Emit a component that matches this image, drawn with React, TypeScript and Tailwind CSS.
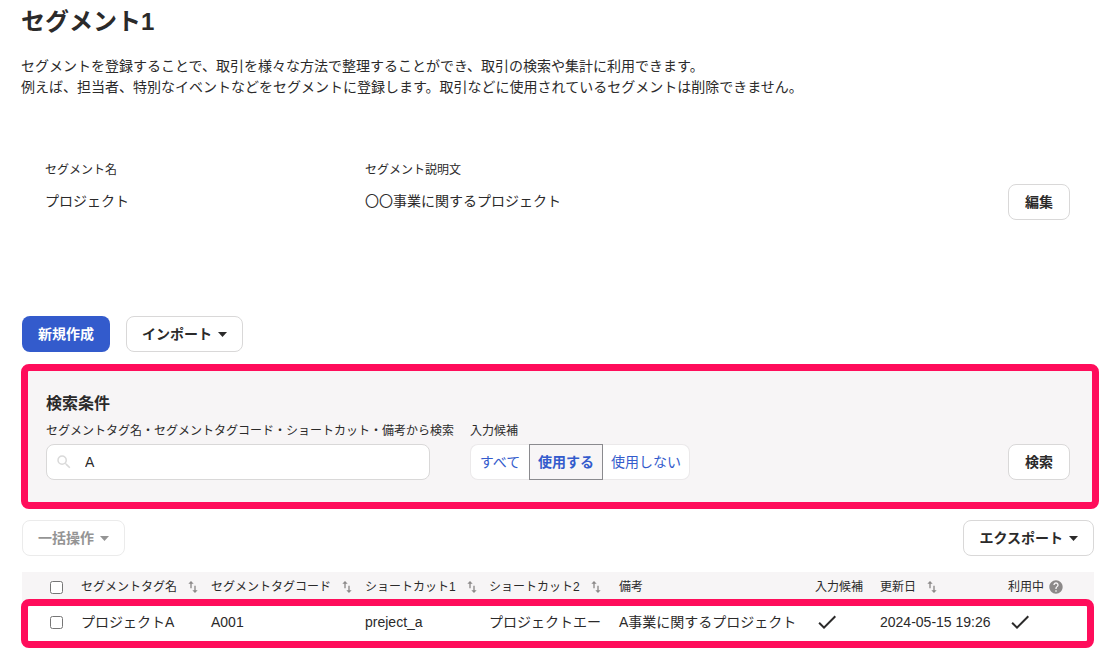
import { useState } from "react";
import type { ReactNode } from "react";
import { MdCheck, MdHelp, MdImportExport, MdSearch } from "react-icons/md";

interface Tag {
  id: number;
  name: string;
  code: string;
  shortcut1: string;
  shortcut2: string;
  note: string;
  suggest: boolean;
  updatedAt: string;
  active: boolean;
}

const tags: Tag[] = [
  {
    id: 1,
    name: "プロジェクトA",
    code: "A001",
    shortcut1: "preject_a",
    shortcut2: "プロジェクトエー",
    note: "A事業に関するプロジェクト",
    suggest: true,
    updatedAt: "2024-05-15 19:26",
    active: true,
  },
];

const columns = [
  { label: "セグメントタグ名", width: "w-[130px]", sortable: true },
  { label: "セグメントタグコード", width: "w-[154px]", sortable: true },
  { label: "ショートカット1", width: "w-[124px]", sortable: true },
  { label: "ショートカット2", width: "w-[130px]", sortable: true },
  { label: "備考", width: "w-auto", sortable: false },
  { label: "入力候補", width: "w-[65px]", sortable: false },
  { label: "更新日", width: "w-[128px]", sortable: true },
  { label: "利用中", width: "w-[94px]", sortable: false, help: true },
];

const suggestOptions = ["すべて", "使用する", "使用しない"];

function Caret() {
  return (
    <svg viewBox="0 0 9 5" className="w-[9px] h-[5px] fill-current" aria-hidden="true">
      <path d="M0 0h9L4.5 5z" />
    </svg>
  );
}

function Button({ children, disabled }: { children: ReactNode; disabled?: boolean }) {
  return (
    <button
      type="button"
      disabled={disabled}
      className="flex items-center justify-center gap-1.5 min-w-[62px] h-9 px-[15px] rounded-lg border border-[#d9d8d8] bg-white text-sm font-bold whitespace-nowrap hover:bg-[#f7f5f5] disabled:border-[#ebebeb] disabled:text-[#949494] disabled:bg-white"
    >
      {children}
    </button>
  );
}

export default function App() {
  const [query, setQuery] = useState("A");
  const [suggest, setSuggest] = useState("使用する");
  const [selected, setSelected] = useState<number[]>([]);

  const allSelected = selected.length === tags.length;

  function toggle(id: number) {
    setSelected((prev) => (prev.includes(id) ? prev.filter((v) => v !== id) : [...prev, id]));
  }

  return (
    <main className="min-h-screen pt-1 pb-3 pl-[21px] pr-[15px] bg-white text-[#2b2a2a] font-['Liberation_Sans','Noto_Sans_CJK_JP',sans-serif]">
      {/* Header */}
      <h1 className="text-2xl leading-9 font-bold">セグメント1</h1>
      <p className="mt-4 text-sm leading-[21px]">
        セグメントを登録することで、取引を様々な方法で整理することができ、取引の検索や集計に利用できます。
        <br />
        例えば、担当者、特別なイベントなどをセグメントに登録します。取引などに使用されているセグメントは削除できません。
      </p>

      {/* Segment info */}
      <section className="flex items-end mt-[62px] pl-6 pr-[29px] h-[60px]">
        <dl className="flex flex-1 self-start">
          <div className="w-80">
            <dt className="text-xs leading-5">セグメント名</dt>
            <dd className="mt-[11px] text-sm leading-[21px]">プロジェクト</dd>
          </div>
          <div className="flex-1">
            <dt className="text-xs leading-5">セグメント説明文</dt>
            <dd className="mt-[11px] text-sm leading-[21px]">〇〇事業に関するプロジェクト</dd>
          </div>
        </dl>
        <Button>編集</Button>
      </section>

      <div className="flex gap-4 mt-24 pl-px">
        <button
          type="button"
          className="h-9 px-4 rounded-lg bg-[#335bcc] text-white text-sm font-bold hover:bg-[#2b4fb3]"
        >
          新規作成
        </button>
        <Button>
          インポート
          <Caret />
        </Button>
      </div>

      {/* Search */}
      <form
        onSubmit={(e) => e.preventDefault()}
        className="mt-3 pt-[21px] pb-[22px] pl-[18px] pr-[22px] border-[7px] border-[#ff0d5b] rounded-lg bg-[#f7f5f6]"
      >
        <h2 className="text-base leading-6 font-bold">検索条件</h2>
        <div className="flex items-end gap-4 mt-1.5">
          <div>
            <label htmlFor="query" className="block text-xs leading-[18px] whitespace-nowrap">
              セグメントタグ名・セグメントタグコード・ショートカット・備考から検索
            </label>
            <div className="flex items-center gap-3 w-96 h-9 mt-1 pl-2 pr-3 rounded-lg border border-[#d9d8d8] bg-white">
              <MdSearch className="w-[18px] h-[18px] text-[#d9d9d9]" />
              <input
                id="query"
                type="text"
                value={query}
                onChange={(e) => setQuery(e.target.value)}
                className="flex-1 min-w-0 text-sm outline-none"
              />
            </div>
          </div>
          <div role="group" aria-labelledby="suggest-label">
            <div id="suggest-label" className="text-xs leading-[18px]">入力候補</div>
            <div className="flex h-9 mt-1">
              {suggestOptions.map((option) => (
                <button
                  key={option}
                  type="button"
                  aria-pressed={suggest === option}
                  onClick={() => setSuggest(option)}
                  className={`min-w-[59px] px-2 border text-sm text-[#335bcc] whitespace-nowrap first:rounded-l-lg first:border-r-0 last:rounded-r-lg last:border-l-0 ${suggest === option ? "border-[#8a8a8e] bg-[#f7f5f6] font-bold" : "border-[#ebe9ea] bg-white"}`}
                >
                  {option}
                </button>
              ))}
            </div>
          </div>
          <div className="ml-auto">
            <Button>検索</Button>
          </div>
        </div>
      </form>

      <div className="flex justify-between mt-[11px] pl-px pr-[5px]">
        <Button disabled>
          一括操作
          <Caret />
        </Button>
        <Button>
          エクスポート
          <Caret />
        </Button>
      </div>

      {/* Table */}
      <div className="relative mt-4 pl-px mr-[5px]">
        <table className="w-full table-fixed text-left">
          <thead className="bg-[#f7f5f6]">
            <tr className="h-[30px]">
              <th className="w-[51px] pl-7">
                <input
                  type="checkbox"
                  aria-label="すべて選択"
                  checked={allSelected}
                  onChange={() => setSelected(allSelected ? [] : tags.map((t) => t.id))}
                  className="block w-[13px] h-[13px]"
                />
              </th>
              {columns.map((col) => (
                <th key={col.label} className={`${col.width} pl-2 text-xs font-normal whitespace-nowrap`}>
                  <span className="flex items-center">
                    {col.label}
                    {col.sortable && (
                      <button type="button" aria-label={`${col.label}で並べ替え`} className="ml-2">
                        <MdImportExport className="w-4 h-4 text-[#8c8989]" />
                      </button>
                    )}
                    {col.help && <MdHelp className="w-4 h-4 ml-1 text-[#8c8989]" />}
                  </span>
                </th>
              ))}
            </tr>
          </thead>
          <tbody>
            {tags.map((tag) => (
              <tr key={tag.id} className="h-10 text-sm whitespace-nowrap">
                <td className="pl-7">
                  <input
                    type="checkbox"
                    aria-label={tag.name}
                    checked={selected.includes(tag.id)}
                    onChange={() => toggle(tag.id)}
                    className="block w-[13px] h-[13px]"
                  />
                </td>
                <td className="pl-2">{tag.name}</td>
                <td className="pl-2">{tag.code}</td>
                <td className="pl-2">{tag.shortcut1}</td>
                <td className="pl-2">{tag.shortcut2}</td>
                <td className="pl-2">{tag.note}</td>
                <td className="pl-2">{tag.suggest && <MdCheck className="w-6 h-6" />}</td>
                <td className="pl-2">{tag.updatedAt}</td>
                <td className="pl-2">{tag.active && <MdCheck className="w-6 h-6" />}</td>
              </tr>
            ))}
          </tbody>
        </table>
        {/* Frame around the matching row */}
        <div className="absolute inset-x-0 top-[27px] h-[49px] border-[7px] border-[#ff0d5b] rounded-lg pointer-events-none" />
      </div>
    </main>
  );
}
